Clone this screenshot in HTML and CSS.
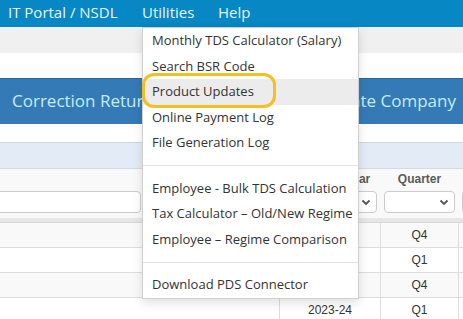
FILE: index.html
```html
<!DOCTYPE html>
<html>
<head>
<meta charset="utf-8">
<link rel="stylesheet" href="styles.css">
</head>
<body>
<header class="topnav">
  <ul class="nav">
    <li class="nav-item nav-first">IT Portal / NSDL</li>
    <li class="nav-item nav-util">Utilities
      <ul class="dropdown">
        <li class="dd-item">Monthly TDS Calculator (Salary)</li>
        <li class="dd-item">Search BSR Code</li>
        <li class="dd-item active">Product Updates<span class="ring"></span></li>
        <li class="dd-item">Online Payment Log</li>
        <li class="dd-item">File Generation Log</li>
        <li class="divider"></li>
        <li class="dd-item">Employee - Bulk TDS Calculation</li>
        <li class="dd-item">Tax Calculator – Old/New Regime</li>
        <li class="dd-item">Employee – Regime Comparison</li>
        <li class="divider"></li>
        <li class="dd-item">Download PDS Connector</li>
      </ul>
    </li>
    <li class="nav-item">Help</li>
  </ul>
</header>
<div class="subbar"></div>
<div class="spacer"></div>
<div class="titlebar"><span>Correction Return</span><span>Private Company</span></div>
<div class="gap"></div>
<div class="band"></div>
<div class="grid">
  <div class="th"></div>
  <div class="th col">Financial Year</div>
  <div class="th col">Quarter</div>
  <div class="th col"></div>

  <div class="tf"><div class="input wide"></div></div>
  <div class="tf col"><div class="select"><svg class="chev" width="10" height="7" viewBox="0 0 10 7"><path d="M1.5 1.5 L5 5 L8.5 1.5" fill="none" stroke="#555" stroke-width="1.8"/></svg></div></div>
  <div class="tf col"><div class="select"><svg class="chev" width="10" height="7" viewBox="0 0 10 7"><path d="M1.5 1.5 L5 5 L8.5 1.5" fill="none" stroke="#555" stroke-width="1.8"/></svg></div></div>
  <div class="tf col"><div class="select"></div></div>

  <div class="sep"></div>

  <div class="td odd"></div><div class="td odd col">2023-24</div><div class="td odd col">Q4</div><div class="td odd col"></div>
  <div class="td"></div><div class="td col">2023-24</div><div class="td col">Q1</div><div class="td col"></div>
  <div class="td odd"></div><div class="td odd col">2023-24</div><div class="td odd col">Q4</div><div class="td odd col"></div>
  <div class="td"></div><div class="td col">2023-24</div><div class="td col">Q1</div><div class="td col"></div>
</div>
</body>
</html>
```
FILE: styles.css
```css
html, body {
  margin: 0;
  padding: 0;
}
body {
  width: 463px;
  height: 319px;
  overflow: hidden;
  background: #fff;
  font-family: "Open Sans", "Liberation Sans", sans-serif;
}

.topnav {
  height: 27px;
  background: #0787c3;
  position: relative;
  z-index: 5;
}
.nav {
  list-style: none;
  margin: 0;
  padding: 0 0 0 8px;
  display: flex;
  height: 27px;
}
.nav-item {
  color: #e8f5fc;
  font-size: 15px;
  line-height: 25px;
  position: relative;
  white-space: nowrap;
}
.nav-first { width: 134px; }
.nav-util { width: 76px; }

.dropdown {
  position: absolute;
  top: 27px;
  left: 0;
  width: 215px;
  margin: 0;
  padding: 0;
  list-style: none;
  background: #fff;
  border: 1px solid #cfcfcf;
  box-shadow: 0 4px 10px rgba(0, 0, 0, 0.12);
  font-size: 13px;
  color: #333;
}
.dd-item {
  line-height: 25.5px;
  padding-left: 9px;
  white-space: nowrap;
}
.active {
  background: #ececec;
  position: relative;
}
.ring {
  position: absolute;
  left: -1px;
  top: -6px;
  width: 134px;
  height: 35px;
  box-sizing: border-box;
  border: 3.5px solid #f5bf22;
  border-radius: 12px;
}
.divider {
  height: 1px;
  background: #e3e3e3;
  margin: 9.5px 0;
}

.subbar {
  height: 26px;
  background: #f0f0f0;
}
.spacer {
  height: 25px;
}
.titlebar {
  height: 45px;
  line-height: 43px;
  border-top: 1px solid #2b6a96;
  background: #337ab7;
  color: #c8ecfb;
  font-size: 17px;
  display: flex;
  justify-content: space-between;
  padding: 0 7px 0 12px;
}
.gap {
  height: 18px;
}
.band {
  height: 25px;
  background: #e3ebf6;
  border-top: 1px solid #cdd6e0;
  border-bottom: 1px solid #d3dae3;
}

.grid {
  display: grid;
  grid-template-columns: 279px 101px 78px 1fr;
  font-family: "Liberation Sans", Arial, sans-serif;
}
.col {
  border-left: 1px solid #dddddd;
}
.th {
  height: 21px;
  line-height: 21px;
  background: #f9f9f9;
  text-align: center;
  font-size: 12px;
  font-weight: bold;
  color: #5a5a5a;
  white-space: nowrap;
  overflow: hidden;
}
.th.col { border-left-color: #f9f9f9; }
.tf {
  height: 28px;
  background: #f9f9f9;
  padding: 1px 3px 0;
  box-sizing: border-box;
}
.tf.col { border-left-color: #f9f9f9; }
.select, .input {
  height: 22px;
  box-sizing: border-box;
  border: 1px solid #cccccc;
  border-radius: 4px;
  background: #fff;
  display: flex;
  align-items: center;
  justify-content: flex-end;
  padding-right: 5px;
}
.input.wide {
  margin-left: -8px;
  margin-right: 135px;
}
.chev { display: block; }
.sep {
  grid-column: 1 / -1;
  height: 4px;
  background: #e6e6e6;
  border-bottom: 1px solid #d8d8d8;
}
.td {
  height: 24px;
  line-height: 24px;
  border-bottom: 1px solid #dddddd;
  text-align: center;
  font-size: 12px;
  color: #333;
}
.odd {
  background: #f9f9f9;
}
```
